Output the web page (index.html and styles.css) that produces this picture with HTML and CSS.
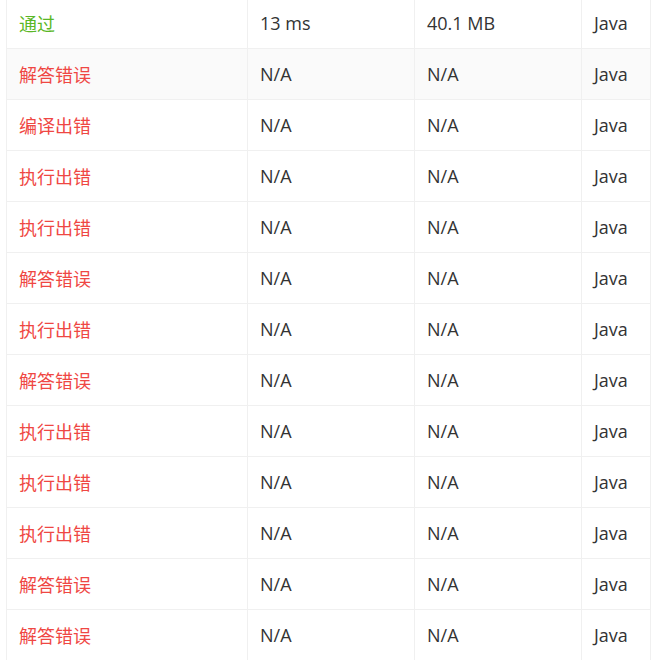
FILE: index.html
```html
<!DOCTYPE html>
<html lang="zh-CN">
<head>
<meta charset="utf-8">
<title>提交记录</title>
<link rel="stylesheet" href="styles.css">
</head>
<body>
<div class="table">
  <div class="row"><div class="cell status ok">通过</div><div class="cell">13 ms</div><div class="cell">40.1 MB</div><div class="cell">Java</div></div>
  <div class="row hover"><div class="cell status err">解答错误</div><div class="cell">N/A</div><div class="cell">N/A</div><div class="cell">Java</div></div>
  <div class="row"><div class="cell status err">编译出错</div><div class="cell">N/A</div><div class="cell">N/A</div><div class="cell">Java</div></div>
  <div class="row"><div class="cell status err">执行出错</div><div class="cell">N/A</div><div class="cell">N/A</div><div class="cell">Java</div></div>
  <div class="row"><div class="cell status err">执行出错</div><div class="cell">N/A</div><div class="cell">N/A</div><div class="cell">Java</div></div>
  <div class="row"><div class="cell status err">解答错误</div><div class="cell">N/A</div><div class="cell">N/A</div><div class="cell">Java</div></div>
  <div class="row"><div class="cell status err">执行出错</div><div class="cell">N/A</div><div class="cell">N/A</div><div class="cell">Java</div></div>
  <div class="row"><div class="cell status err">解答错误</div><div class="cell">N/A</div><div class="cell">N/A</div><div class="cell">Java</div></div>
  <div class="row"><div class="cell status err">执行出错</div><div class="cell">N/A</div><div class="cell">N/A</div><div class="cell">Java</div></div>
  <div class="row"><div class="cell status err">执行出错</div><div class="cell">N/A</div><div class="cell">N/A</div><div class="cell">Java</div></div>
  <div class="row"><div class="cell status err">执行出错</div><div class="cell">N/A</div><div class="cell">N/A</div><div class="cell">Java</div></div>
  <div class="row"><div class="cell status err">解答错误</div><div class="cell">N/A</div><div class="cell">N/A</div><div class="cell">Java</div></div>
  <div class="row"><div class="cell status err">解答错误</div><div class="cell">N/A</div><div class="cell">N/A</div><div class="cell">Java</div></div>
</div>
</body>
</html>
```
FILE: styles.css
```css
html, body {
  margin: 0;
  padding: 0;
  background: #fff;
}
body {
  font-family: "Open Sans", "Noto Sans CJK SC", sans-serif;
  font-size: 18px;
  color: #333;
  overflow: hidden;
}
.table {
  margin: -3px 0 0 6px;
  width: 644px;
  border-left: 1px solid #f0f0f0;
  border-top: 1px solid #f0f0f0;
}
.row {
  display: grid;
  grid-template-columns: 241px 167px 167px 69px;
}
.row.hover {
  background: #fafafa;
}
.cell {
  height: 50px;
  display: flex;
  align-items: center;
  padding: 0 12px;
  border-right: 1px solid #f0f0f0;
  border-bottom: 1px solid #f0f0f0;
  white-space: nowrap;
}
.status {
  font-family: "Noto Sans CJK SC", sans-serif;
}
.ok { color: #5ab726; }
.err { color: #ef4743; }
```
